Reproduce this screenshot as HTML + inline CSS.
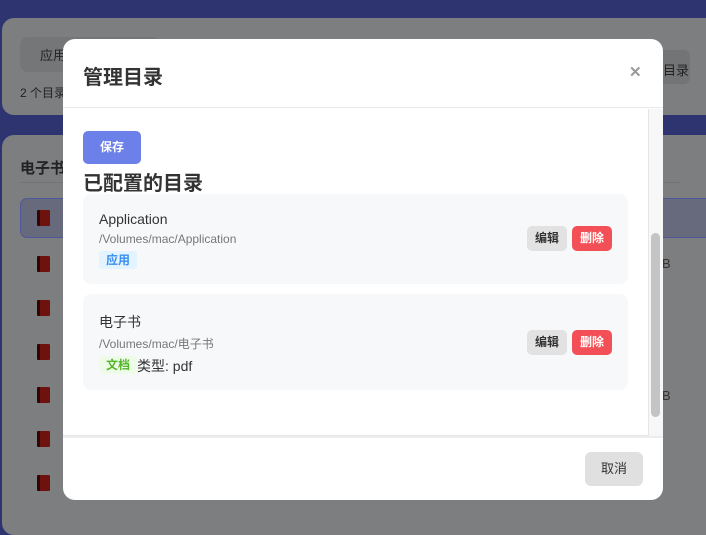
<!DOCTYPE html><html><head><meta charset="utf-8"><style>
*{box-sizing:border-box;margin:0;padding:0}
body{width:706px;height:511px;overflow:hidden;background:#2e3470;font-family:"Liberation Sans","Noto Sans CJK SC",sans-serif;position:relative}
.bg{position:absolute;background:#7d7e80;border-radius:12px}
.ov{position:absolute;color:#222;font-size:13px}
.book{position:absolute;left:37px;width:13px;height:16px;background:#6e120e;border-left:3px solid #300604;border-radius:1px}
.modal{position:absolute;left:63px;top:39px;width:600px;height:461px;background:#fff;border-radius:12px;overflow:hidden}
.hd{height:69px;border-bottom:1px solid #e8e8e8;position:relative}
.hd h1{position:absolute;left:20px;top:22px;font-size:20px;font-weight:bold;color:#333}
.x{position:absolute;left:566px;top:24px;font-size:15px;color:#999;font-weight:bold}
.bd{position:absolute;top:70px;left:0;width:600px;height:327px;border-bottom:1px solid #e6e6e6}
.track{position:absolute;left:585px;top:70px;width:15px;height:327px;background:#f7f7f7;border-left:1px solid #e6e6e6}
.thumb{position:absolute;left:588px;top:194px;width:9px;height:184px;background:#c4c4c4;border-radius:5px}
.save{position:absolute;left:20px;top:92px;width:58px;height:33px;background:#6b80e8;color:#fff;border-radius:5px;font-size:12px;font-weight:bold;text-align:center;line-height:33px}
.h2{position:absolute;left:20px;top:128px;font-size:20px;font-weight:bold;color:#333}
.card{position:absolute;left:20px;width:545px;background:#f7f8fa;border-radius:8px}
.t{position:absolute;left:16px;font-size:14px;color:#333}
.p{position:absolute;left:16px;font-size:12px;color:#777}
.tag{position:absolute;font-size:12px;font-weight:bold;padding:0 7px;height:18px;line-height:18px;border-radius:3px}
.ed{position:absolute;left:444px;width:40px;height:25px;background:#e2e2e2;border-radius:5px;font-size:12px;text-align:center;line-height:25px;color:#333;font-weight:bold}
.del{position:absolute;left:489px;width:40px;height:25px;background:#f25056;border-radius:5px;font-size:12px;text-align:center;line-height:25px;color:#fff;font-weight:bold}
.sep{position:absolute;top:397px;left:0;width:600px;height:2px;background:#ededed}
.cancel{position:absolute;left:522px;top:413px;width:58px;height:34px;background:#e0e0e0;border-radius:6px;font-size:13px;text-align:center;line-height:34px;color:#333}
</style></head><body>
<div class="bg" style="left:2px;top:18px;width:720px;height:97px"></div>
<div class="bg" style="left:20px;top:37px;width:140px;height:35px;background:#757678;border-radius:8px"></div>
<div class="ov" style="left:40px;top:45px">应用</div>
<div class="ov" style="left:20px;top:84px;font-size:12px;color:#222">2 个目录</div>
<div class="bg" style="left:650px;top:50px;width:40px;height:34px;background:#737476;border-radius:6px"></div>
<div class="ov" style="left:663px;top:60px">目录</div>
<div class="bg" style="left:2px;top:135px;width:720px;height:400px"></div>
<div class="ov" style="left:20px;top:157px;font-size:15px;font-weight:bold">电子书</div>
<div style="position:absolute;left:20px;top:182px;width:660px;height:1px;background:#727375"></div>
<div class="bg" style="left:20px;top:198px;width:700px;height:40px;background:#676a7d;border:1px solid #4f569a;border-radius:7px"></div>
<div class="book" style="top:210px"></div><div class="book" style="top:256px"></div><div class="book" style="top:300px"></div><div class="book" style="top:344px"></div><div class="book" style="top:387px"></div><div class="book" style="top:431px"></div><div class="book" style="top:475px"></div>
<div class="ov" style="left:662px;top:256px;color:#333">B</div>
<div class="ov" style="left:662px;top:388px;color:#333">B</div>
<div class="modal">
<div class="hd"><h1>管理目录</h1><div class="x">✕</div></div>
<div class="bd"></div>
<div class="track"></div><div class="thumb"></div>
<div class="save">保存</div>
<div class="h2">已配置的目录</div>
<div class="card" style="top:155px;height:90px">
<div class="t" style="top:17px">Application</div>
<div class="p" style="top:38px">/Volumes/mac/Application</div>
<div class="tag" style="left:16px;top:57px;background:#e3f3ff;color:#3a8ff0">应用</div>
<div class="ed" style="top:32px">编辑</div><div class="del" style="top:32px">删除</div>
</div>
<div class="card" style="top:255px;height:96px">
<div class="t" style="top:18px">电子书</div>
<div class="p" style="top:41px">/Volumes/mac/电子书</div>
<div class="tag" style="left:16px;top:62px;background:#effbe9;color:#52b52a">文档</div>
<div class="t" style="left:54px;top:62px;font-size:14px">类型: pdf</div>
<div class="ed" style="top:36px">编辑</div><div class="del" style="top:36px">删除</div>
</div>
<div class="sep"></div>
<div class="cancel">取消</div>
</div>
</body></html>
